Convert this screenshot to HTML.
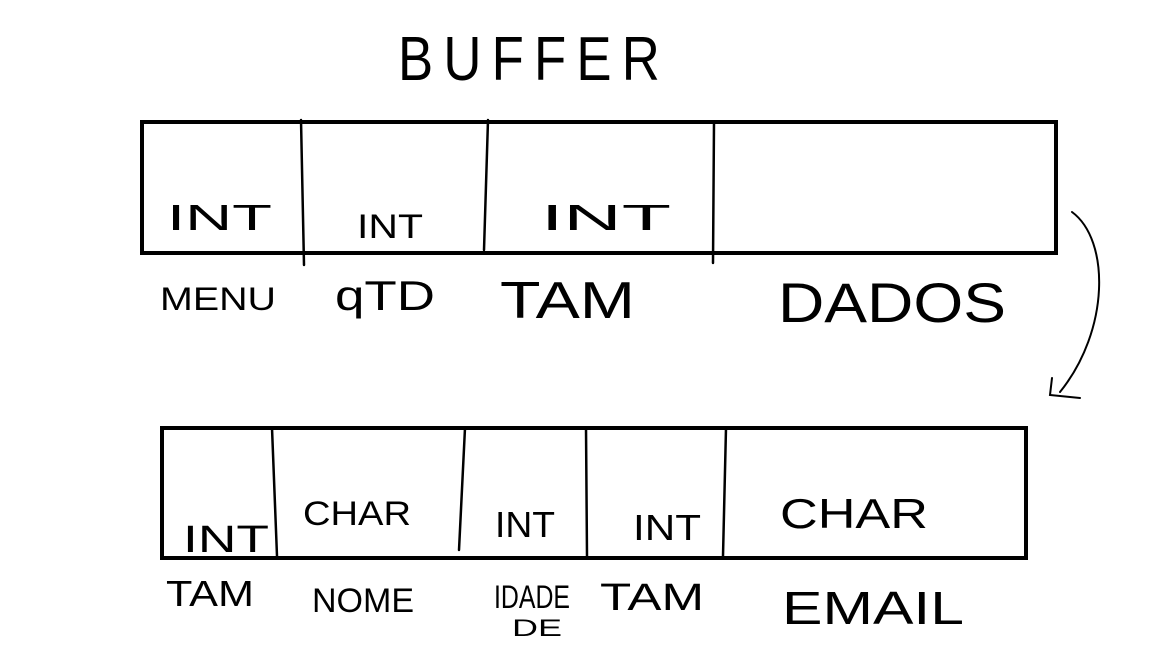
<!DOCTYPE html>
<html><head><meta charset="utf-8"><style>
html,body{margin:0;padding:0;background:#fff;width:1152px;height:648px;overflow:hidden}
svg text{font-family:"Liberation Sans",sans-serif;fill:#000}
</style></head><body>
<svg width="1152" height="648" viewBox="0 0 1152 648" xmlns="http://www.w3.org/2000/svg">
<g stroke="#000" fill="none" stroke-linecap="round">
<rect x="142" y="122" width="914" height="131" stroke-width="4"/>
<path d="M301 120 L304 265" stroke-width="2.5"/>
<path d="M488 120 L484 250" stroke-width="2.5"/>
<path d="M714 122 L713 263" stroke-width="2.5"/>
<rect x="162" y="428" width="864" height="130" stroke-width="4"/>
<path d="M272 428 L277 556" stroke-width="2.5"/>
<path d="M465 428 L459 550" stroke-width="2.5"/>
<path d="M586 428 L587 556" stroke-width="2.5"/>
<path d="M726 428 L723 556" stroke-width="2.5"/>
<path d="M1072 212 C1110 240 1110 330 1060 392" stroke-width="2"/>
<path d="M1052 378 L1050 395 L1080 398" stroke-width="2"/>
</g>
<g font-weight="normal">
<text x="398" y="80" font-size="62" letter-spacing="12" textLength="272" lengthAdjust="spacingAndGlyphs">BUFFER</text>
<text x="167" y="230" font-size="36" textLength="105" lengthAdjust="spacingAndGlyphs">INT</text>
<text x="357" y="238" font-size="34" textLength="66" lengthAdjust="spacingAndGlyphs">INT</text>
<text x="541" y="230" font-size="36" textLength="130" lengthAdjust="spacingAndGlyphs">INT</text>
<text x="160" y="310" font-size="32" textLength="116" lengthAdjust="spacingAndGlyphs">MENU</text>
<text x="335" y="310" font-size="42" textLength="100" lengthAdjust="spacingAndGlyphs">qTD</text>
<text x="500" y="318" font-size="52" textLength="135" lengthAdjust="spacingAndGlyphs">TAM</text>
<text x="778" y="322" font-size="56" textLength="228" lengthAdjust="spacingAndGlyphs">DADOS</text>
<text x="183" y="552" font-size="38" textLength="86" lengthAdjust="spacingAndGlyphs">INT</text>
<text x="303" y="525" font-size="34" textLength="108" lengthAdjust="spacingAndGlyphs">CHAR</text>
<text x="495" y="537" font-size="36" textLength="60" lengthAdjust="spacingAndGlyphs">INT</text>
<text x="633" y="540" font-size="36" textLength="68" lengthAdjust="spacingAndGlyphs">INT</text>
<text x="780" y="528" font-size="42" textLength="148" lengthAdjust="spacingAndGlyphs">CHAR</text>
<text x="166" y="606" font-size="36" textLength="88" lengthAdjust="spacingAndGlyphs">TAM</text>
<text x="312" y="612" font-size="34" textLength="102" lengthAdjust="spacingAndGlyphs">NOME</text>
<text x="494" y="608" font-size="32" textLength="76" lengthAdjust="spacingAndGlyphs">IDADE</text>
<text x="512" y="636" font-size="24" textLength="50" lengthAdjust="spacingAndGlyphs">DE</text>
<text x="600" y="610" font-size="38" textLength="104" lengthAdjust="spacingAndGlyphs">TAM</text>
<text x="782" y="624" font-size="46" textLength="182" lengthAdjust="spacingAndGlyphs">EMAIL</text>
</g>
</svg>
</body></html>
